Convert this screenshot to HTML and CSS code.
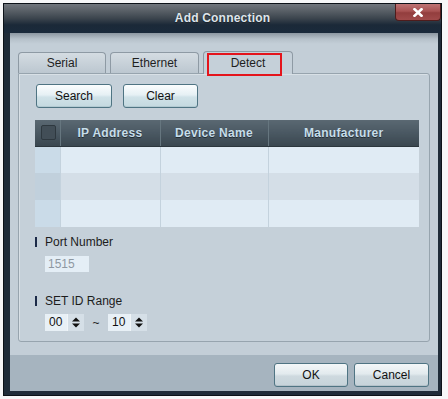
FILE: index.html
```html
<!DOCTYPE html>
<html lang="en">
<head>
    <meta charset="UTF-8">
    <title>Add Connection</title>
    <link rel="stylesheet" href="styles.css">
</head>
<body>
    <div class="window">
        <!-- Заголовок окна -->
        <div class="titlebar">
            <span class="title">Add Connection</span>
            <button class="close" aria-label="Close">
                <svg width="10" height="9" viewBox="0 0 10 9"><path d="M1.5 1.2 L8.5 7.8 M8.5 1.2 L1.5 7.8" stroke="#fff" stroke-width="2.6" stroke-linecap="square"/></svg>
            </button>
        </div>
        <div class="frame">
            <div class="client">
                <div class="tabs">
                    <div class="tab">Serial</div>
                    <div class="tab">Ethernet</div>
                    <div class="tab active">Detect<span class="mark"></span></div>
                </div>
                <div class="panel">
                    <div class="actions">
                        <button class="btn">Search</button>
                        <button class="btn">Clear</button>
                    </div>
                    <table class="grid">
                        <thead>
                            <tr>
                                <th class="check"><span class="box"></span></th>
                                <th class="ip">IP Address</th>
                                <th class="dev">Device Name</th>
                                <th>Manufacturer</th>
                            </tr>
                        </thead>
                        <tbody>
                            <tr><td class="check"></td><td></td><td></td><td></td></tr>
                            <tr><td class="check"></td><td></td><td></td><td></td></tr>
                            <tr><td class="check"></td><td></td><td></td><td></td></tr>
                        </tbody>
                    </table>
                    <div class="label label-port">Port Number</div>
                    <div class="field">1515</div>
                    <div class="label label-range">SET ID Range</div>
                    <div class="range">
                        <div class="spin">
                            <span class="value">00</span>
                            <span class="arrows"><svg width="8" height="11" viewBox="0 0 8 11"><path d="M0 4.5 L4 0.5 L8 4.5 Z M0 6.5 L4 10.5 L8 6.5 Z" fill="#111"/></svg></span>
                        </div>
                        <span class="tilde">~</span>
                        <div class="spin">
                            <span class="value">10</span>
                            <span class="arrows"><svg width="8" height="11" viewBox="0 0 8 11"><path d="M0 4.5 L4 0.5 L8 4.5 Z M0 6.5 L4 10.5 L8 6.5 Z" fill="#111"/></svg></span>
                        </div>
                    </div>
                </div>
                <div class="footer">
                    <button class="btn btn-footer">OK</button>
                    <button class="btn btn-footer">Cancel</button>
                </div>
            </div>
        </div>
    </div>
</body>
</html>
```

FILE: styles.css
```css
body {
    margin: 0;
    background: #f6f7f8;
    font-family: 'Liberation Sans', Arial, sans-serif;
    font-size: 12px;
    color: #1a1a1a;
}

.window {
    margin: 3px 0 0 3px;
    width: 439px;
    height: 393px;
    box-sizing: border-box;
    border: 1px solid #0c1218;
    background: #1f2c39;
    display: flex;
    flex-direction: column;
}

.titlebar {
    height: 29px;
    flex: none;
    position: relative;
    display: flex;
    justify-content: center;
    align-items: center;
    background: linear-gradient(#70767d 0, #575e65 25%, #3b444d 50%, #1b2938 72%, #1a2a3b 100%);
}

.title {
    color: #dfe5ea;
    font-weight: bold;
    font-size: 12px;
    letter-spacing: 0.2px;
    text-shadow: 0 1px 1px #1a2028;
    margin-top: -1px;
}

.close {
    position: absolute;
    top: 0;
    right: 0;
    width: 46px;
    height: 17px;
    padding: 0;
    border: 1px solid #4e1c1c;
    border-top: none;
    border-radius: 0 0 4px 4px;
    background: linear-gradient(#be7474 0, #a85252 45%, #933e3e 55%, #a04a4a 100%);
    display: flex;
    justify-content: center;
    align-items: center;
}

.frame {
    flex: 1;
    padding: 0 3px 4px 6px;
    display: flex;
}

.client {
    flex: 1;
    display: flex;
    flex-direction: column;
    padding-top: 19px;
    background: linear-gradient(#8c97a1 0, #b6c1ca 6px, #c3ced7 11px, #c3ced7 100%);
}

.tabs {
    display: flex;
    gap: 4px;
    margin-left: 8px;
    height: 21px;
    position: relative;
    z-index: 2;
}

.tab {
    box-sizing: border-box;
    width: 88px;
    height: 21px;
    border: 1px solid #8e9aa4;
    border-bottom: none;
    border-radius: 4px 4px 0 0;
    background: linear-gradient(#d4dce2, #bcc7d0);
    text-align: center;
    line-height: 21px;
    color: #1e1e1e;
}

.tab:nth-child(2) {
    width: 89px;
}

.tab.active {
    width: 90px;
    height: 23px;
    margin-top: -1px;
    background: #c5d0d9;
    position: relative;
    line-height: 23px;
}

.mark {
    position: absolute;
    left: 3px;
    top: 1px;
    width: 75px;
    height: 23px;
    box-sizing: border-box;
    border: 2px solid #e4141c;
}

.panel {
    box-sizing: border-box;
    height: 269px;
    margin: 0 8px;
    border: 1px solid #97a4ae;
    border-radius: 0 3px 3px 3px;
    background: #c5d0d9;
    padding: 10px 10px 0 16px;
    box-shadow: inset 1px 1px 0 #d8e0e6;
}

.actions {
    display: flex;
    gap: 11px;
    margin-left: 1px;
}

.btn {
    box-sizing: border-box;
    width: 76px;
    height: 24px;
    padding: 0;
    border: 1px solid #4f7483;
    border-radius: 3px;
    background: linear-gradient(#fbfdfe 0, #e6f0f4 45%, #d0e2e8 55%, #c4d9e0 100%);
    box-shadow: inset 0 -1px 0 #b2cad2;
    font-family: 'Liberation Sans', Arial, sans-serif;
    font-size: 12px;
    color: #111;
}

.actions .btn:last-child {
    width: 75px;
}

.grid {
    margin-top: 12px;
    width: 384px;
    border-collapse: collapse;
    table-layout: fixed;
}

.grid th {
    height: 26px;
    padding: 0;
    background: linear-gradient(#5a6872 0, #4a5862 50%, #3a4750 100%);
    border-right: 1px solid #66767f;
    border-bottom: 1px solid #2c363d;
    color: #c7deea;
    font-weight: bold;
    font-size: 12px;
    letter-spacing: 0.3px;
    text-shadow: 0 1px 0 #222c33;
    box-sizing: border-box;
}

.grid th:last-child {
    border-right: none;
}

.grid th.check {
    width: 25px;
}

.grid th.ip {
    width: 100px;
}

.grid th.dev {
    width: 108px;
}

.box {
    display: block;
    width: 13px;
    height: 13px;
    margin-left: 6px;
    border: 1px solid #2e383f;
    border-radius: 2px;
    background: #424e57;
}

.grid td {
    height: 27px;
    padding: 0;
    background: #e0ebf4;
    border-right: 1px solid #c4d2dd;
    box-sizing: border-box;
}

.grid td:last-child {
    border-right: none;
}

.grid tr:nth-child(2) td {
    background: #d4dee7;
}

.grid td.check {
    background: #cadbe8;
}

.grid tr:nth-child(2) td.check {
    background: #c1d0dc;
}

.label {
    position: relative;
    height: 14px;
    line-height: 14px;
    padding-left: 10px;
    margin-top: 8px;
    color: #1c1c1c;
}

.label::before {
    content: '';
    position: absolute;
    left: 0;
    top: 2px;
    width: 2px;
    height: 10px;
    background: #1c2a48;
}

.label-range {
    margin-top: 22px;
}

.field {
    box-sizing: border-box;
    width: 44px;
    height: 16px;
    margin: 7px 0 0 10px;
    padding-left: 3px;
    line-height: 16px;
    background: #e4eef6;
    color: #8e98a2;
}

.range {
    display: flex;
    align-items: center;
    margin: 6px 0 0 10px;
}

.spin {
    display: flex;
    width: 39px;
    height: 17px;
    background: #e8f0f6;
}

.value {
    width: 22px;
    padding-left: 4px;
    box-sizing: border-box;
    line-height: 17px;
    color: #111;
}

.arrows {
    flex: 1;
    display: flex;
    justify-content: center;
    align-items: center;
    background: #d5dfe7;
    border-left: 1px solid #f0f5f8;
}

.tilde {
    width: 24px;
    text-align: center;
    color: #222;
}

.footer {
    margin-top: auto;
    height: 36px;
    box-sizing: border-box;
    background: #a6b4bf;
    display: flex;
    justify-content: flex-end;
    gap: 6px;
    padding: 8px 9px 0 0;
}

.btn-footer {
    width: 74px;
    background: linear-gradient(#f4f7f8 0, #e2eaee 45%, #ced9df 55%, #c6d3da 100%);
    box-shadow: inset 0 -1px 0 #b4c2ca;
}

.btn-footer:last-child {
    width: 75px;
}
```
